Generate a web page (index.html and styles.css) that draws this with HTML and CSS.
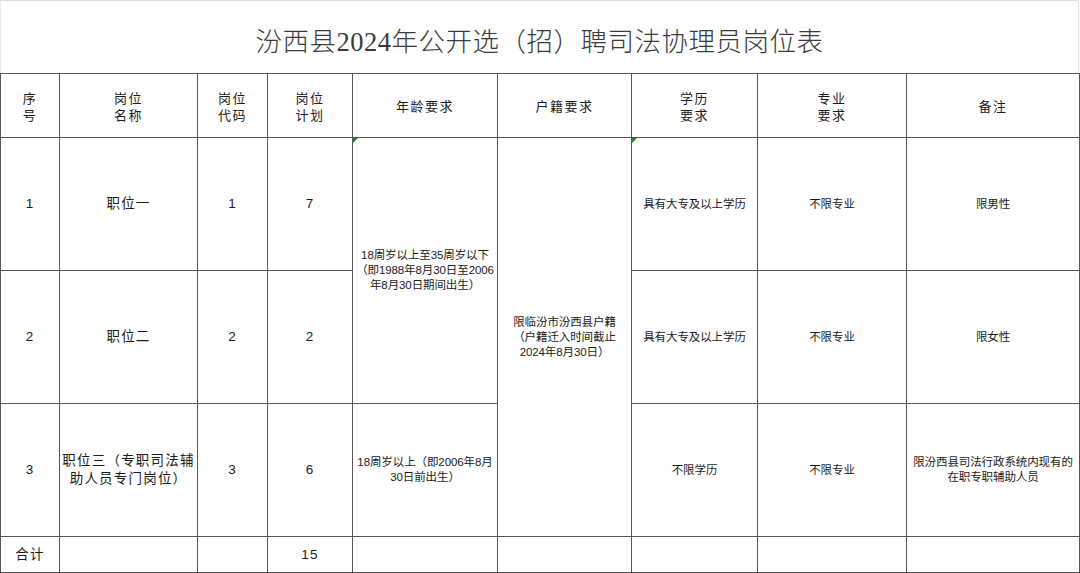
FILE: index.html
```html
<!DOCTYPE html>
<html lang="zh">
<head>
<meta charset="utf-8">
<title>汾西县2024年公开选（招）聘司法协理员岗位表</title>
<link rel="stylesheet" href="styles.css">
</head>
<body>
<div class="sheet">
  <div class="title">汾西县2024年公开选（招）聘司法协理员岗位表</div>
  <table class="grid">
    <colgroup>
      <col class="c1"><col class="c2"><col class="c3"><col class="c4"><col class="c5"><col class="c6"><col class="c7"><col class="c8"><col class="c9">
    </colgroup>
    <thead>
      <tr class="head">
        <th>序<br>号</th>
        <th>岗位<br>名称</th>
        <th>岗位<br>代码</th>
        <th>岗位<br>计划</th>
        <th>年龄要求</th>
        <th>户籍要求</th>
        <th>学历<br>要求</th>
        <th>专业<br>要求</th>
        <th>备注</th>
      </tr>
    </thead>
    <tbody>
      <tr class="row r1">
        <td class="big">1</td>
        <td class="big">职位一</td>
        <td class="big">1</td>
        <td class="big">7</td>
        <td rowspan="2" class="small flag">18周岁以上至35周岁以下<br>（即1988年8月30日至2006<br>年8月30日期间出生）</td>
        <td rowspan="3" class="small">限临汾市汾西县户籍<br>（户籍迁入时间截止<br>2024年8月30日）</td>
        <td class="small flag">具有大专及以上学历</td>
        <td class="small">不限专业</td>
        <td class="small">限男性</td>
      </tr>
      <tr class="row r2">
        <td class="big">2</td>
        <td class="big">职位二</td>
        <td class="big">2</td>
        <td class="big">2</td>
        <td class="small">具有大专及以上学历</td>
        <td class="small">不限专业</td>
        <td class="small">限女性</td>
      </tr>
      <tr class="row r3">
        <td class="big">3</td>
        <td class="big">职位三（专职司法辅<br>助人员专门岗位）</td>
        <td class="big">3</td>
        <td class="big">6</td>
        <td class="small">18周岁以上（即2006年8月<br>30日前出生）</td>
        <td class="small">不限学历</td>
        <td class="small">不限专业</td>
        <td class="small">限汾西县司法行政系统内现有的<br>在职专职辅助人员</td>
      </tr>
      <tr class="total">
        <td class="big">合计</td>
        <td></td>
        <td></td>
        <td class="big">15</td>
        <td></td>
        <td></td>
        <td></td>
        <td></td>
        <td></td>
      </tr>
    </tbody>
  </table>
</div>
</body>
</html>
```

FILE: styles.css
```css
html, body {
  margin: 0;
  padding: 0;
  background: #ffffff;
}

.sheet {
  width: 1080px;
  height: 573px;
  overflow: hidden;
  font-family: "Noto Sans CJK SC", sans-serif;
  color: #111;
}

.title {
  box-sizing: border-box;
  height: 73px;
  width: 1079px;
  border-top: 1px solid #dcdcdc;
  border-right: 1px solid #dcdcdc;
  border-left: 1px solid #e8e8e8;
  display: flex;
  align-items: center;
  justify-content: center;
  padding-top: 5px;
  font-family: "Liberation Serif", "Noto Sans CJK SC", serif;
  font-size: 26.5px;
  font-weight: 300;
  color: #3a3a3a;
  letter-spacing: 0.5px;
}

.grid {
  width: 1079px;
  table-layout: fixed;
  border-collapse: collapse;
  border-top: 1px solid #444;
  border-bottom: 1px solid #111;
  border-left: 1px solid #111;
  border-right: 1px solid #888;
}

.c1 { width: 59px; }
.c2 { width: 138px; }
.c3 { width: 70px; }
.c4 { width: 85px; }
.c5 { width: 145px; }
.c6 { width: 134px; }
.c7 { width: 126px; }
.c8 { width: 149px; }
.c9 { width: 173px; }

.grid th,
.grid td {
  border: 1px solid #555;
  padding: 0;
  text-align: center;
  vertical-align: middle;
  font-weight: normal;
  color: #1a1a1a;
}

.grid th:nth-child(3), .grid td:nth-child(3) { border-left-color: #111; }
.grid th:nth-child(6) { border-left-color: #111; }

.head th {
  height: 63px;
  font-size: 13px;
  line-height: 17px;
  letter-spacing: 1.5px;
}

.r1 td { height: 132px; }
.r2 td { height: 132px; }
.r3 td { height: 132px; }
.total td { height: 35px; }

.big {
  font-size: 13.5px;
  line-height: 18px;
  letter-spacing: 1.2px;
  font-family: "Liberation Sans", "Noto Sans CJK SC", sans-serif;
}

.small {
  font-size: 11.5px;
  line-height: 15px;
  letter-spacing: -0.1px;
  font-family: "Liberation Sans Narrow", "Liberation Sans", "Noto Sans CJK SC", sans-serif;
}

.flag {
  position: relative;
}

.flag::before {
  content: "";
  position: absolute;
  top: 0;
  left: 0;
  width: 0;
  height: 0;
  border-top: 5px solid #178a17;
  border-right: 5px solid transparent;
}
```
